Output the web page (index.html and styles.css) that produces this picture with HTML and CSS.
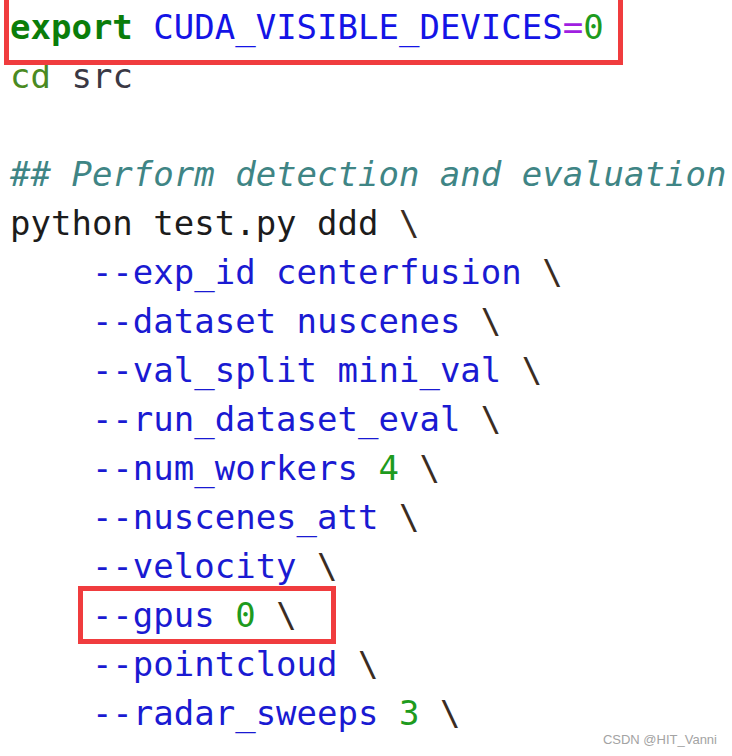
FILE: index.html
```html
<!DOCTYPE html>
<html>
<head>
<meta charset="utf-8">
<link rel="stylesheet" href="styles.css">
</head>
<body>
<div class="page">
<pre class="code"><span class="kw">export</span> <span class="var">CUDA_VISIBLE_DEVICES</span><span class="op">=</span><span class="num">0</span>
<span class="cmd">cd</span> <span class="arg">src</span>

<span class="cm">## Perform detection and evaluation</span>
<span class="plain">python test.py ddd </span><span class="bs">\</span>
    <span class="fl">--exp_id centerfusion</span> <span class="bs">\</span>
    <span class="fl">--dataset nuscenes</span> <span class="bs">\</span>
    <span class="fl">--val_split mini_val</span> <span class="bs">\</span>
    <span class="fl">--run_dataset_eval</span> <span class="bs">\</span>
    <span class="fl">--num_workers</span> <span class="num">4</span> <span class="bs">\</span>
    <span class="fl">--nuscenes_att</span> <span class="bs">\</span>
    <span class="fl">--velocity</span> <span class="bs">\</span>
    <span class="fl">--gpus</span> <span class="num">0</span> <span class="bs">\</span>
    <span class="fl">--pointcloud</span> <span class="bs">\</span>
    <span class="fl">--radar_sweeps</span> <span class="num">3</span> <span class="bs">\</span></pre>
<div class="mark mark-export"></div>
<div class="mark mark-gpus"></div>
<div class="watermark">CSDN @HIT_Vanni</div>
</div>
</body>
</html>
```

FILE: styles.css
```css
html, body {
  margin: 0;
  padding: 0;
  background: #ffffff;
}

.page {
  position: relative;
  width: 732px;
  height: 756px;
  overflow: hidden;
}

.code {
  margin: 0;
  padding: 3px 0 0 10px;
  font-family: "DejaVu Sans Mono", monospace;
  font-size: 34px;
  line-height: 49px;
  color: #1c1c1c;
  white-space: pre;
}

.kw { color: #0a7d0a; font-weight: bold; }
.var { color: #1414e6; }
.op { color: #a01ee0; }
.num { color: #1e9b1e; }
.cmd { color: #4a8a22; }
.arg { color: #3a3844; }
.cm { color: #3f8585; font-style: italic; }
.plain { color: #1c1c1c; }
.fl { color: #1a1ad2; }
.bs { color: #3b2c22; }

.mark {
  position: absolute;
  border: 5px solid #f03c3e;
  box-sizing: border-box;
}

.mark-export {
  left: 4px;
  top: -10px;
  width: 619px;
  height: 75px;
}

.mark-gpus {
  left: 78px;
  top: 586px;
  width: 258px;
  height: 58px;
}

.watermark {
  position: absolute;
  right: 15px;
  bottom: 9px;
  font-family: "Liberation Sans", Arial, sans-serif;
  font-size: 13px;
  color: #a3a3a3;
}
```
